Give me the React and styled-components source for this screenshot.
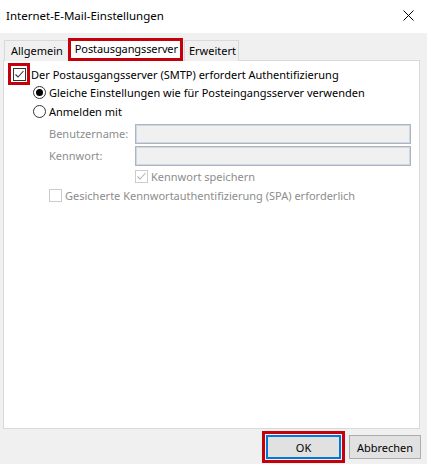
import React from 'react'
import styled, { createGlobalStyle } from 'styled-components'

const red = '#c4000b'

const GlobalStyle = createGlobalStyle`
  html, body {
    margin: 0;
    padding: 0;
    background: #f0f0f0;
  }
  body {
    font-family: 'Segoe UI', 'Noto Sans', 'Liberation Sans', sans-serif;
    font-size: 11px;
    color: #000;
  }
`

const Window = styled.div`
  width: 427px;
  height: 464px;
  display: flex;
  flex-direction: column;
  background: #f0f0f0;
  overflow: hidden;
`

const TitleBar = styled.div`
  height: 33px;
  flex: none;
  background: #fff;
  display: flex;
  align-items: center;
  justify-content: space-between;
  padding: 0 13px 2px 6px;
  box-sizing: border-box;
`

const Title = styled.span`
  font-size: 11.5px;
  color: #000;
`

const TabRow = styled.div`
  display: flex;
  align-items: flex-end;
  padding: 3px 0 0 4px;
  height: 27px;
  flex: none;
  box-sizing: border-box;
  position: relative;
  z-index: 1;
`

const Tab = styled.div`
  height: 19px;
  margin-bottom: -1px;
  padding: ${p => (p.$last ? '0 2px 1px 4px' : '0 5px 1px 6px')};
  border: 1px solid #d9d9d9;
  border-bottom: none;
  background: #f0f0f0;
  display: flex;
  align-items: center;
  margin-right: ${p => (p.$last ? 0 : '-1px')};
`

const ActiveTab = styled.div`
  height: 23px;
  margin-bottom: -1px;
  box-sizing: border-box;
  border: 3px solid ${red};
  background: #fff;
  display: flex;
  align-items: center;
  padding: 0 2px 2px 4px;
  margin-right: 1px;
  letter-spacing: -0.1px;
`

const Panel = styled.div`
  flex: 1;
  margin: 0 7px 0 3px;
  background: #fff;
  border: 1px solid #d9d9d9;
  display: flex;
  flex-direction: column;
  padding: 2px 0 0 4px;
`

const Row = styled.label`
  display: flex;
  align-items: center;
  height: ${p => p.$h || 19}px;
  padding-left: ${p => p.$indent || 0}px;
  color: ${p => (p.$disabled ? '#8d8d8d' : '#000')};
  white-space: nowrap;
`

const RedFrame = styled.span`
  width: 22px;
  height: 22px;
  box-sizing: border-box;
  border: 3px solid ${red};
  display: flex;
  align-items: center;
  justify-content: center;
  margin-right: 1px;
`

const Box = styled.span`
  width: 13px;
  height: 13px;
  box-sizing: border-box;
  border: 1px solid ${p => (p.$disabled ? '#cccccc' : '#333')};
  background: #fff;
  display: flex;
  align-items: center;
  justify-content: center;
  margin-right: ${p => p.$gap || 0}px;
  flex: none;
`

const Radio = styled.span`
  width: 13px;
  height: 13px;
  box-sizing: border-box;
  border-radius: 50%;
  border: 1px solid #333;
  display: flex;
  align-items: center;
  justify-content: center;
  margin-right: 3px;
  flex: none;

  &::after {
    content: '';
    width: 7px;
    height: 7px;
    border-radius: 50%;
    background: ${p => (p.$on ? '#000' : 'transparent')};
  }
`

const RadioGroup = styled.div`
  display: flex;
  flex-direction: column;
  margin-top: -2px;
  margin-bottom: 3px;
`

const FieldRow = styled.div`
  display: flex;
  align-items: flex-start;
  height: 22px;
  padding-left: 41px;
  padding-right: 8px;
`

const FieldLabel = styled.span`
  width: 86px;
  line-height: 20px;
  color: #8d8d8d;
  flex: none;
`

const Input = styled.div`
  flex: 1;
  height: 20px;
  box-sizing: border-box;
  background: #f0f0f0;
  border: 1px solid #b4b4b4;
  box-shadow: inset 0 0 0 1px #c6d8ee;
`

const Footer = styled.div`
  height: 35px;
  flex: none;
  display: flex;
  justify-content: flex-end;
  align-items: center;
  padding: 1px 6px 0 0;
  box-sizing: border-box;
  gap: 4px;
`

const RedButtonFrame = styled.div`
  border: 3px solid ${red};
  padding: 1px;
  display: flex;
`

const Button = styled.button`
  width: ${p => p.$w || 75}px;
  height: 24px;
  box-sizing: border-box;
  font-family: inherit;
  font-size: 11px;
  color: #000;
  background: #e1e1e1;
  border: ${p => (p.$default ? '2px solid #0078d7' : '1px solid #adadad')};
  padding: 0;
  margin: 0;
`

const Check = ({ color }) => (
  <svg width="11" height="11" viewBox="0 0 11 11">
    <path d="M1.5 5.5 L4 8 L9.5 2" fill="none" stroke={color} strokeWidth="1.1" />
  </svg>
)

const CloseIcon = () => (
  <svg width="11" height="11" viewBox="0 0 11 11">
    <path d="M0.5 0.5 L10.5 10.5 M10.5 0.5 L0.5 10.5" stroke="#000" strokeWidth="1" />
  </svg>
)

const App = () => (
  <Window>
    <GlobalStyle />
    <TitleBar>
      <Title>Internet-E-Mail-Einstellungen</Title>
      <CloseIcon />
    </TitleBar>
    <TabRow>
      <Tab>Allgemein</Tab>
      <ActiveTab>Postausgangsserver</ActiveTab>
      <Tab $last>Erweitert</Tab>
    </TabRow>
    <Panel>
      <Row $h={22}>
        <RedFrame>
          <Box>
            <Check color="#333" />
          </Box>
        </RedFrame>
        Der Postausgangsserver (SMTP) erfordert Authentifizierung
      </Row>
      <RadioGroup>
        <Row $indent={25}>
          <Radio $on />
          Gleiche Einstellungen wie für Posteingangsserver verwenden
        </Row>
        <Row $indent={25}>
          <Radio />
          Anmelden mit
        </Row>
      </RadioGroup>
      <FieldRow>
        <FieldLabel>Benutzername:</FieldLabel>
        <Input />
      </FieldRow>
      <FieldRow>
        <FieldLabel>Kennwort:</FieldLabel>
        <Input />
      </FieldRow>
      <Row $h={17} $indent={127} $disabled>
        <Box $disabled $gap={3}>
          <Check color="#b5b5b5" />
        </Box>
        Kennwort speichern
      </Row>
      <Row $h={21} $indent={41} $disabled>
        <Box $disabled $gap={3} />
        Gesicherte Kennwortauthentifizierung (SPA) erforderlich
      </Row>
    </Panel>
    <Footer>
      <RedButtonFrame>
        <Button $default>OK</Button>
      </RedButtonFrame>
      <Button $w={72}>Abbrechen</Button>
    </Footer>
  </Window>
)

export default App
